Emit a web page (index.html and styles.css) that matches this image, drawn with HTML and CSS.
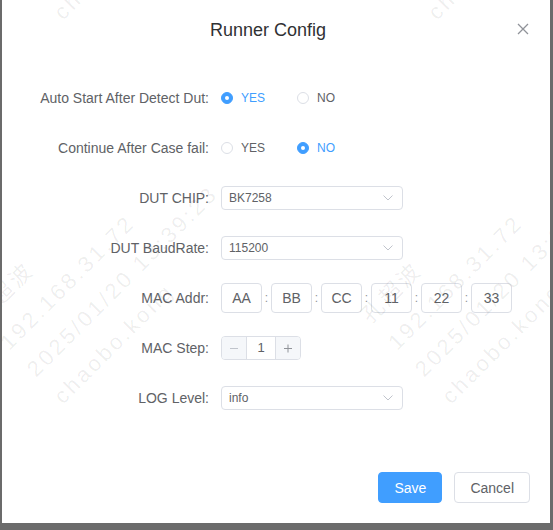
FILE: index.html
```html
<!DOCTYPE html>
<html lang="en">

<head>
    <meta charset="UTF-8">
    <meta name="viewport" content="width=device-width, initial-scale=1.0">
    <title>Runner Config</title>
    <link rel="stylesheet" href="styles.css">
</head>

<body>
    <div class="dialog">
        <div class="dialog-header">
            <span class="dialog-title">Runner Config</span>
            <button class="dialog-close" type="button">
                <svg width="12" height="12" viewBox="0 0 12 12">
                    <path d="M1 1L11 11M11 1L1 11" stroke="#909399" stroke-width="1.3" fill="none" />
                </svg>
            </button>
        </div>

        <form class="config-form">
            <div class="form-item">
                <label class="form-label">Auto Start After Detect Dut:</label>
                <div class="form-content">
                    <label class="radio is-checked"><span class="radio-dot"></span>YES</label>
                    <label class="radio"><span class="radio-dot"></span>NO</label>
                </div>
            </div>
            <div class="form-item">
                <label class="form-label">Continue After Case fail:</label>
                <div class="form-content">
                    <label class="radio"><span class="radio-dot"></span>YES</label>
                    <label class="radio is-checked"><span class="radio-dot"></span>NO</label>
                </div>
            </div>
            <div class="form-item">
                <label class="form-label">DUT CHIP:</label>
                <div class="form-content">
                    <div class="select">
                        <span>BK7258</span>
                        <svg class="select-arrow" width="10" height="6" viewBox="0 0 10 6">
                            <path d="M0.5 0.5L5 5L9.5 0.5" stroke="#c0c4cc" stroke-width="1" fill="none" />
                        </svg>
                    </div>
                </div>
            </div>
            <div class="form-item">
                <label class="form-label">DUT BaudRate:</label>
                <div class="form-content">
                    <div class="select">
                        <span>115200</span>
                        <svg class="select-arrow" width="10" height="6" viewBox="0 0 10 6">
                            <path d="M0.5 0.5L5 5L9.5 0.5" stroke="#c0c4cc" stroke-width="1" fill="none" />
                        </svg>
                    </div>
                </div>
            </div>
            <div class="form-item">
                <label class="form-label">MAC Addr:</label>
                <div class="form-content">
                    <div class="mac-box">AA</div><span class="mac-sep">:</span>
                    <div class="mac-box">BB</div><span class="mac-sep">:</span>
                    <div class="mac-box">CC</div><span class="mac-sep">:</span>
                    <div class="mac-box">11</div><span class="mac-sep">:</span>
                    <div class="mac-box">22</div><span class="mac-sep">:</span>
                    <div class="mac-box">33</div>
                </div>
            </div>
            <div class="form-item">
                <label class="form-label">MAC Step:</label>
                <div class="form-content">
                    <div class="num-input">
                        <span class="num-btn num-minus">
                            <svg width="10" height="10" viewBox="0 0 10 10">
                                <path d="M1 5.5H9" stroke="#c0c4cc" stroke-width="1" />
                            </svg>
                        </span>
                        <span class="num-value">1</span>
                        <span class="num-btn num-plus">
                            <svg width="10" height="10" viewBox="0 0 10 10">
                                <path d="M1 5.5H9M5 1.5V9.5" stroke="#909399" stroke-width="1" />
                            </svg>
                        </span>
                    </div>
                </div>
            </div>
            <div class="form-item">
                <label class="form-label">LOG Level:</label>
                <div class="form-content">
                    <div class="select">
                        <span>info</span>
                        <svg class="select-arrow" width="10" height="6" viewBox="0 0 10 6">
                            <path d="M0.5 0.5L5 5L9.5 0.5" stroke="#c0c4cc" stroke-width="1" fill="none" />
                        </svg>
                    </div>
                </div>
            </div>
        </form>

        <div class="dialog-footer">
            <button class="btn btn-primary" type="button">Save</button>
            <button class="btn" type="button">Cancel</button>
        </div>

        <!-- user watermark, drawn over the whole dialog -->
        <div class="watermark">
            <div class="wm-block wm-1">
                <div>孔超波</div>
                <div>192.168.31.72</div>
                <div>2025/01/20 13:39:23</div>
                <div>chaobo.kong</div>
            </div>
            <div class="wm-block wm-2">
                <div>孔超波</div>
                <div>192.168.31.72</div>
                <div>2025/01/20 13:39:23</div>
                <div>chaobo.kong</div>
            </div>
            <div class="wm-block wm-3">
                <div>孔超波</div>
                <div>192.168.31.72</div>
                <div>2025/01/20 13:39:23</div>
                <div>chaobo.kong</div>
            </div>
            <div class="wm-block wm-4">
                <div>孔超波</div>
                <div>192.168.31.72</div>
                <div>2025/01/20 13:39:23</div>
                <div>chaobo.kong</div>
            </div>
        </div>
    </div>
</body>

</html>
```

FILE: styles.css
```css
* {
    box-sizing: border-box;
}

body {
    margin: 0;
    background-color: #6b6b6b;
    font-family: "Liberation Sans", Arial, sans-serif;
}

.dialog {
    position: relative;
    width: 548px;
    height: 523px;
    margin-left: 2px;
    background-color: #fff;
    overflow: hidden;
}

.dialog-header {
    height: 82px;
    padding: 18px 36px 0 20px;
    text-align: center;
}

.dialog-title {
    font-size: 18px;
    line-height: 24px;
    color: #303133;
}

.dialog-close {
    position: absolute;
    top: 23px;
    right: 21px;
    width: 12px;
    height: 12px;
    padding: 0;
    border: none;
    background: none;
    line-height: 0;
}

.config-form {
    padding: 0 20px;
}

.form-item {
    display: flex;
    align-items: center;
    height: 32px;
    margin-bottom: 18px;
}

.form-label {
    width: 199px;
    padding-right: 12px;
    text-align: right;
    font-size: 14px;
    color: #606266;
}

.form-content {
    display: flex;
    align-items: center;
}

/* radios */
.radio {
    display: inline-flex;
    align-items: center;
    margin-right: 32px;
    font-size: 12px;
    color: #606266;
}

.radio-dot {
    position: relative;
    width: 12px;
    height: 12px;
    margin-right: 8px;
    border: 1px solid #dcdfe6;
    border-radius: 50%;
}

.radio.is-checked {
    color: #409eff;
}

.radio.is-checked .radio-dot {
    border-color: #409eff;
    background-color: #409eff;
}

.radio.is-checked .radio-dot::after {
    content: "";
    position: absolute;
    top: 3px;
    left: 3px;
    width: 4px;
    height: 4px;
    border-radius: 50%;
    background-color: #fff;
}

/* selects */
.select {
    display: flex;
    align-items: center;
    justify-content: space-between;
    width: 182px;
    height: 24px;
    padding: 0 9px 0 7px;
    border: 1px solid #dcdfe6;
    border-radius: 4px;
    font-size: 12px;
    color: #606266;
}

/* mac address */
.mac-box {
    display: flex;
    align-items: center;
    justify-content: center;
    width: 41px;
    height: 30px;
    border: 1px solid #dcdfe6;
    border-radius: 4px;
    font-size: 14px;
    color: #606266;
}

.mac-sep {
    width: 9px;
    text-align: center;
    font-size: 12px;
    color: #909399;
}

/* input number */
.num-input {
    display: flex;
    width: 80px;
    height: 24px;
    border: 1px solid #dcdfe6;
    border-radius: 4px;
    overflow: hidden;
}

.num-btn {
    display: flex;
    align-items: center;
    justify-content: center;
    width: 25px;
    background-color: #f5f7fa;
}

.num-minus {
    border-right: 1px solid #dcdfe6;
}

.num-plus {
    border-left: 1px solid #dcdfe6;
}

.num-value {
    flex: 1;
    text-align: center;
    font-size: 13px;
    line-height: 22px;
    color: #606266;
}

/* footer */
.dialog-footer {
    display: flex;
    justify-content: flex-end;
    gap: 12px;
    padding: 40px 20px 0 0;
}

.btn {
    height: 31px;
    padding: 0 15px;
    border: 1px solid #dcdfe6;
    border-radius: 4px;
    background-color: #fff;
    font-family: inherit;
    font-size: 14px;
    color: #606266;
}

.btn-primary {
    border-color: #409eff;
    background-color: #409eff;
    color: #fff;
}

/* watermark */
.watermark {
    position: absolute;
    top: 0;
    left: 0;
    right: 0;
    bottom: 0;
    pointer-events: none;
}

.wm-block {
    position: absolute;
    transform-origin: 0 0;
    transform: rotate(-45deg);
    font-family: "Liberation Sans", "Noto Sans CJK SC", sans-serif;
    font-size: 22px;
    line-height: 38px;
    letter-spacing: 3px;
    white-space: nowrap;
    color: rgba(0, 0, 0, 0.07);
}

.wm-1 {
    left: -38px;
    top: 306px;
}

.wm-2 {
    left: 350px;
    top: 306px;
}

.wm-3 {
    left: -38px;
    top: -78px;
}

.wm-4 {
    left: 336px;
    top: -78px;
}
```
